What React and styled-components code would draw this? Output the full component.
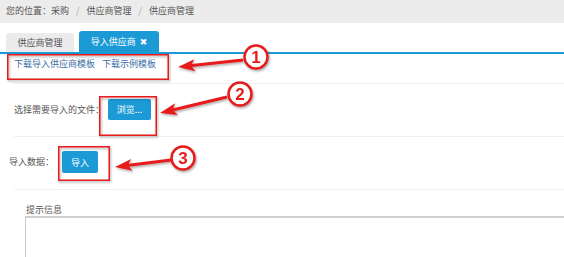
import styled, { createGlobalStyle } from "styled-components";

const GlobalStyle = createGlobalStyle`
    html, body {
        margin: 0;
        padding: 0;
        background: #ffffff;
    }
    body {
        font-family: "Noto Sans CJK SC", "Noto Sans", sans-serif;
        font-size: 9px;
        color: #555555;
        overflow: hidden;
    }
`

const blue = "#1b9ad6"
const red = "#e61b1b"

const annotations = [
    { box: [7, 54, 162, 26], tip: [178, 67], tail: [243, 60], circle: [256, 57], n: 1 },
    { box: [99, 96, 58, 40], tip: [160, 113], tail: [227, 97], circle: [240, 94], n: 2 },
    { box: [58, 146, 52, 35], tip: [115, 167], tail: [171, 160], circle: [183, 158], n: 3 },
]

function Arrow({ tip, tail }) {
    const [x1, y1] = tip
    const [x2, y2] = tail
    const deg = (Math.atan2(y2 - y1, x2 - x1) * 180) / Math.PI
    const len = Math.hypot(x2 - x1, y2 - y1)
    return (
        <g transform={`translate(${x1} ${y1}) rotate(${deg})`}>
            <path d={`M0 0 L17 -6 L14 -1.6 L${len} -1.6 L${len} 1.6 L14 1.6 L17 6 Z`} fill={red} />
        </g>
    )
}

function Overlay() {
    return (
        <AnnotationLayer width="564" height="257" viewBox="0 0 564 257">
            <defs>
                <filter id="shadow" x="-20%" y="-20%" width="140%" height="140%">
                    <feDropShadow dx="1" dy="1.5" stdDeviation="1" floodColor="#000" floodOpacity="0.35" />
                </filter>
            </defs>
            {annotations.map(a => (
                <g key={a.n} filter="url(#shadow)">
                    <rect x={a.box[0] + 0.75} y={a.box[1] + 0.75} width={a.box[2] - 1.5} height={a.box[3] - 1.5}
                        fill="none" stroke={red} strokeWidth="1.5" />
                    <Arrow tip={a.tip} tail={a.tail} />
                    <circle cx={a.circle[0]} cy={a.circle[1]} r="11.5" fill="#fff" stroke={red} strokeWidth="2.5" />
                    <CircleNum x={a.circle[0]} y={a.circle[1] + 6} textAnchor="middle">{a.n}</CircleNum>
                </g>
            ))}
        </AnnotationLayer>
    )
}

export default function App() {
    return (
        <Page>
            <GlobalStyle />
            <Breadcrumb>
                您的位置：<Crumb>采购</Crumb><Sep>/</Sep><Crumb>供应商管理</Crumb><Sep>/</Sep><Crumb>供应商管理</Crumb>
            </Breadcrumb>
            <TabBar>
                <Tab>供应商管理</Tab>
                <Tab active>导入供应商 <Close>✖</Close></Tab>
            </TabBar>
            <Row height={30} top={3}>
                <Links>
                    <LinkText>下载导入供应商模板</LinkText>
                    <LinkText>下载示例模板</LinkText>
                </Links>
            </Row>
            <Row height={53} top={15}>
                <FieldLabel>选择需要导入的文件：</FieldLabel>
                <Button width={43} height={21}>浏览...</Button>
            </Row>
            <Row height={53} top={14}>
                <FieldLabel shift={-5} space={8}>导入数据：</FieldLabel>
                <Button width={36} height={22}>导入</Button>
            </Row>
            <Hint>
                <HintLabel>提示信息</HintLabel>
                <HintBox />
            </Hint>
            <Overlay />
        </Page>
    )
}

const Page = styled.div`
    position: relative;
    width: 564px;
    height: 257px;
    overflow: hidden;
`

const Breadcrumb = styled.div`
    height: 23px;
    line-height: 22px;
    background: #ececec;
    padding-left: 6px;
    color: #555;
    white-space: nowrap;
`

const Crumb = styled.span`
    color: #555;
`

const Sep = styled.span`
    color: #aaa;
    margin: 0 7px;
`

const TabBar = styled.div`
    display: flex;
    align-items: flex-end;
    gap: 5px;
    margin-top: 8px;
    padding-left: 6px;
    border-bottom: 2px solid ${blue};
`

const Tab = styled.div`
    display: flex;
    align-items: center;
    justify-content: center;
    gap: 4px;
    width: ${p => (p.active ? 80 : 68)}px;
    height: ${p => (p.active ? 21 : 19)}px;
    border-radius: 3px 3px 0 0;
    background: ${p => (p.active ? blue : "#ebebeb")};
    color: ${p => (p.active ? "#fff" : "#555")};
`

const Close = styled.span`
    font-family: "DejaVu Sans", sans-serif;
    font-size: 9px;
    font-weight: bold;
`

const Row = styled.div`
    display: flex;
    align-items: flex-start;
    box-sizing: border-box;
    height: ${p => p.height}px;
    margin-left: 14px;
    padding-top: ${p => p.top}px;
    border-bottom: 1px solid #f0f0f0;
`

const Links = styled.div`
    display: flex;
    gap: 7px;
    line-height: 14px;
`

const LinkText = styled.span`
    color: #3b6ea5;
`

const FieldLabel = styled.span`
    line-height: 21px;
    color: #555;
    white-space: nowrap;
    margin-left: ${p => p.shift || 0}px;
    margin-right: ${p => p.space || 4}px;
`

const Button = styled.div`
    display: flex;
    align-items: center;
    justify-content: center;
    width: ${p => p.width}px;
    height: ${p => p.height}px;
    border-radius: 2px;
    background: ${blue};
    color: #fff;
`

const Hint = styled.div`
    padding: 14px 0 0 25px;
`

const HintLabel = styled.div`
    line-height: 12px;
    margin-left: 1px;
    color: #555;
`

const HintBox = styled.div`
    height: 60px;
    border: 1px solid #ccc;
    border-top: 2px solid #cfcfcf;
    border-right: none;
`

const AnnotationLayer = styled.svg`
    position: absolute;
    left: 0;
    top: 0;
    pointer-events: none;
`

const CircleNum = styled.text`
    font-family: "Liberation Sans", Arial, sans-serif;
    font-weight: bold;
    font-size: 17px;
    fill: ${red};
`
